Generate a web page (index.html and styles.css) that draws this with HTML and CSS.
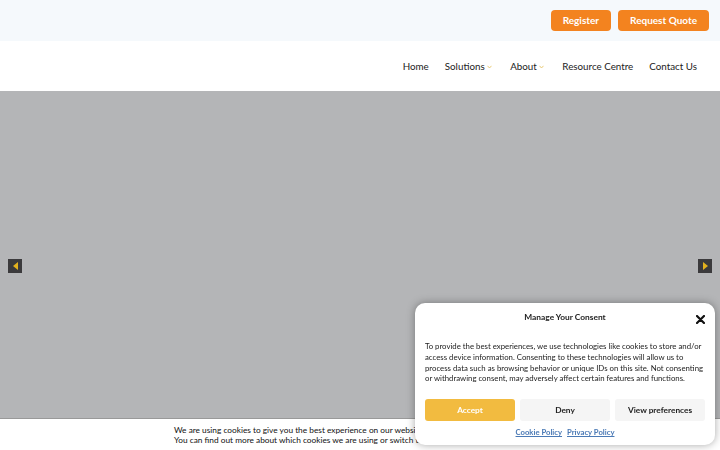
FILE: index.html
```html
<!DOCTYPE html>
<html lang="en">
<head>
    <meta charset="UTF-8">
    <meta name="viewport" content="width=device-width, initial-scale=1.0">
    <title>Home</title>
    <link rel="stylesheet" href="styles.css">
</head>
<body>
    <div class="topbar">
        <a class="btn-orange" href="#">Register</a>
        <a class="btn-orange" href="#">Request Quote</a>
    </div>

    <nav class="mainnav">
        <a href="#">Home</a>
        <a href="#">Solutions <svg class="caret" width="5" height="4" viewBox="0 0 5 4"><path d="M0.5 0.8 L2.5 3 L4.5 0.8" fill="none" stroke="#e6c56a" stroke-width="0.9"/></svg></a>
        <a href="#">About <svg class="caret" width="5" height="4" viewBox="0 0 5 4"><path d="M0.5 0.8 L2.5 3 L4.5 0.8" fill="none" stroke="#e6c56a" stroke-width="0.9"/></svg></a>
        <a href="#">Resource Centre</a>
        <a href="#">Contact Us</a>
    </nav>

    <section class="hero">
        <button class="slide-arrow">
            <svg width="5" height="8" viewBox="0 0 5 8"><path d="M5 0 L0 4 L5 8 Z" fill="#e3b21e"/></svg>
        </button>
        <button class="slide-arrow">
            <svg width="5" height="8" viewBox="0 0 5 8"><path d="M0 0 L5 4 L0 8 Z" fill="#e3b21e"/></svg>
        </button>
    </section>

    <div class="cookie-bar">
        <p>We are using cookies to give you the best experience on our website.<br>
        You can find out more about which cookies we are using or switch them off in settings.</p>
    </div>

    <div class="consent">
        <div class="consent-head">
            <span>Manage Your Consent</span>
            <button class="consent-close">
                <svg width="9" height="9" viewBox="0 0 9 9"><path d="M1 1 L8 8 M8 1 L1 8" stroke="#111" stroke-width="2.2" stroke-linecap="round"/></svg>
            </button>
        </div>
        <p class="consent-text">To provide the best experiences, we use technologies like cookies to store and/or access device information. Consenting to these technologies will allow us to process data such as browsing behavior or unique IDs on this site. Not consenting or withdrawing consent, may adversely affect certain features and functions.</p>
        <div class="consent-buttons">
            <button class="accept">Accept</button>
            <button>Deny</button>
            <button>View preferences</button>
        </div>
        <div class="consent-links">
            <a href="#">Cookie Policy</a>
            <a href="#">Privacy Policy</a>
        </div>
    </div>
</body>
</html>
```

FILE: styles.css
```css
body {
    font-family: Lato, 'Noto Sans', sans-serif;
    margin: 0;
    height: 100vh;
    display: flex;
    flex-direction: column;
    overflow: hidden;
    color: #222;
}

a {
    text-decoration: none;
    color: inherit;
}

.topbar {
    height: 41px;
    background-color: #f5f9fc;
    display: flex;
    justify-content: flex-end;
    align-items: center;
    gap: 7px;
    padding-right: 11px;
}

.btn-orange {
    background-color: #f3831f;
    color: #fff;
    font-size: 10px;
    font-weight: 700;
    border-radius: 4px;
    height: 21px;
    line-height: 21px;
    padding: 0 12px;
    margin-top: -1px;
}

.mainnav {
    height: 50px;
    background-color: #fff;
    display: flex;
    justify-content: flex-end;
    align-items: center;
    gap: 16px;
    padding-right: 23px;
    font-size: 9.8px;
    color: #222;
}

.mainnav a {
    margin-top: -1px;
}

.caret {
    margin-right: 2px;
    vertical-align: 1px;
}

.hero {
    flex: 1;
    background-color: #b4b5b7;
    display: flex;
    justify-content: space-between;
    align-items: center;
    padding: 0 8px 0 8px;
}

.slide-arrow {
    width: 14px;
    height: 14px;
    background-color: #3b3a3c;
    border: none;
    padding: 0;
    display: flex;
    align-items: center;
    justify-content: center;
    margin-top: 22px;
}

.cookie-bar {
    height: 31px;
    background-color: #fff;
    border-top: 1px solid #999;
    padding-left: 174px;
}

.cookie-bar p {
    margin: 7px 0 0;
    font-size: 8.3px;
    line-height: 9.5px;
    color: #111;
    white-space: nowrap;
}

.consent {
    position: fixed;
    left: 415px;
    top: 303px;
    width: 300px;
    height: 142px;
    background-color: #fff;
    border-radius: 10px;
    box-shadow: 0 0 8px rgba(0, 0, 0, 0.35);
    box-sizing: border-box;
    padding: 0 10px;
}

.consent-head {
    height: 28px;
    display: flex;
    justify-content: center;
    align-items: center;
    position: relative;
    font-size: 8.4px;
    font-weight: 700;
    color: #222;
}

.consent-close {
    position: absolute;
    right: 0;
    top: 9px;
    border: none;
    background: none;
    padding: 0;
}

.consent-text {
    margin: 10px 0 0;
    font-size: 7.8px;
    line-height: 10.8px;
    color: #222;
}

.consent-buttons {
    display: flex;
    gap: 5px;
    margin-top: 15px;
}

.consent-buttons button {
    flex: 1;
    height: 22px;
    border: none;
    border-radius: 3px;
    background-color: #f5f5f5;
    font-family: inherit;
    font-size: 8.3px;
    font-weight: 700;
    color: #222;
}

.consent-buttons .accept {
    background-color: #f2bb40;
    color: #fff;
}

.consent-links {
    display: flex;
    justify-content: center;
    gap: 5px;
    margin-top: 6px;
    font-size: 7.7px;
    font-weight: 700;
}

.consent-links a {
    color: #4a79b5;
    text-decoration: underline;
}
```
